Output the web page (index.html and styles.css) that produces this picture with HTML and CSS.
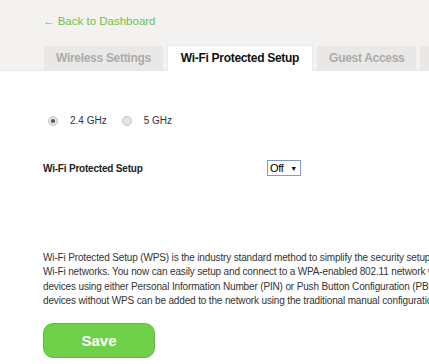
FILE: index.html
```html
<!DOCTYPE html>
<html lang="en">
  <head>
    <meta charset="UTF-8" />
    <meta name="viewport" content="width=device-width, initial-scale=1.0" />
    <title>Wi-Fi Protected Setup</title>
    <link rel="stylesheet" href="styles.css">
  </head>
  <body>
    <div class="header">
      <div class="wrap">
        <a class="back" href="#">&larr; Back to Dashboard</a>
        <ul class="tabs">
          <li class="tab">Wireless Settings</li>
          <li class="tab active">Wi-Fi Protected Setup</li>
          <li class="tab">Guest Access</li>
          <li class="tab">MAC Filtering</li>
        </ul>
      </div>
    </div>

    <div class="wrap content">
      <div class="bands">
        <label class="band"><span class="radio checked"></span>2.4 GHz</label>
        <label class="band"><span class="radio"></span>5 GHz</label>
      </div>

      <div class="row">
        <span class="label">Wi-Fi Protected Setup</span>
        <span class="select">Off <span class="caret">&#9660;</span></span>
      </div>

      <!-- the paragraph is wider than the window, it is clipped on the right -->
      <p class="desc">
        Wi-Fi Protected Setup (WPS) is the industry standard method to simplify the security setup and management of<br>
        Wi-Fi networks. You now can easily setup and connect to a WPA-enabled 802.11 network with WPS-capable<br>
        devices using either Personal Information Number (PIN) or Push Button Configuration (PBC). Legacy<br>
        devices without WPS can be added to the network using the traditional manual configuration method.
      </p>

      <button class="save">Save</button>
    </div>
  </body>
</html>
```

FILE: styles.css
```css
body {
  margin: 0;
  font-family: "Liberation Sans", Arial, sans-serif;
  color: #333;
  background: #fff;
  overflow: hidden;
}

.wrap {
  width: 620px;
  padding-left: 43px;
}

.header {
  background-color: #f3f2f1;
  border-bottom: 1px solid #e8e7e6;
}

.back {
  display: block;
  padding-top: 15px;
  height: 30px;
  font-size: 11.5px;
  color: #6cc24a;
  text-decoration: none;
}

.tabs {
  display: flex;
  gap: 4px;
  list-style: none;
  margin: 0;
  padding: 0 0 0 1px;
}

.tab {
  flex: none;
  padding: 0 12px;
  height: 24px;
  line-height: 25px;
  font-size: 12px;
  font-weight: bold;
  letter-spacing: -0.3px;
  color: #ababab;
  background-color: #e9e8e7;
  margin-top: 1px;
}

.tab.active {
  padding: 0 13px;
  height: 25px;
  margin-top: 0;
  margin-bottom: -1px;
  color: #111;
  background-color: #fff;
  border: 1px solid #ecebea;
  border-bottom: none;
}

.bands {
  display: flex;
  gap: 15px;
  padding: 44px 0 0 5px;
  font-size: 10px;
  color: #333;
}

.band {
  display: flex;
  align-items: center;
}

.radio {
  width: 8px;
  height: 8px;
  border-radius: 50%;
  border: 1px solid #c4c4c4;
  background: #e4e4e4;
  margin-right: 12px;
  position: relative;
}

.radio.checked::after {
  content: "";
  position: absolute;
  left: 2px;
  top: 2px;
  width: 4px;
  height: 4px;
  border-radius: 50%;
  background: #555;
}

.row {
  display: flex;
  align-items: center;
  margin-top: 34px;
}

.label {
  width: 224px;
  font-size: 10px;
  font-weight: bold;
  letter-spacing: -0.2px;
  color: #222;
}

.select {
  display: inline-block;
  height: 14px;
  line-height: 14px;
  padding: 0 3px 0 2px;
  border: 1px solid #7a9cd3;
  font-size: 11px;
  letter-spacing: -0.3px;
  color: #000;
}

.caret {
  font-size: 7px;
  margin-left: 4px;
  vertical-align: 1px;
}

.desc {
  margin: 75px 0 0;
  font-size: 10px;
  line-height: 14.3px;
  letter-spacing: -0.15px;
  color: #333;
  white-space: nowrap;
}

.save {
  display: block;
  margin-top: 15px;
  width: 112px;
  height: 35px;
  border: 1px solid #62bf3e;
  border-radius: 10px;
  background-color: #6fd04a;
  color: #fff;
  font-family: "Liberation Sans", Arial, sans-serif;
  font-size: 15px;
  font-weight: bold;
}
```
